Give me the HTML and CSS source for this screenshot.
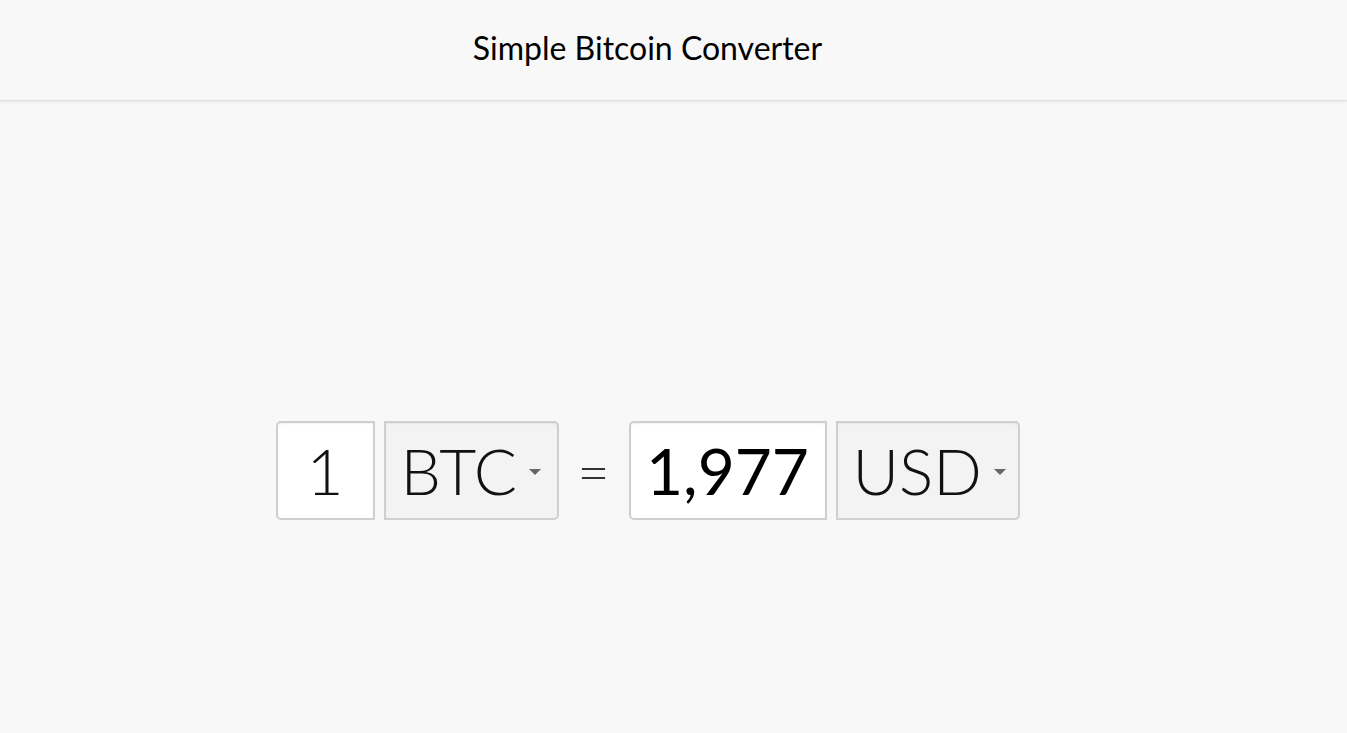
FILE: index.html
```html
<!DOCTYPE html>
<html>
<head>
<meta charset="utf-8">
<link rel="stylesheet" href="styles.css">
</head>
<body>
<header class="header">
  <div class="wrap">
    <h1 class="title">Simple Bitcoin Converter</h1>
  </div>
</header>
<main class="main">
  <div class="wrap">
    <div class="row">
      <div class="group">
        <div class="field field-amount">1</div>
        <div class="select select-btc"><span>BTC</span><i class="caret"></i></div>
      </div>
      <div class="equals">=</div>
      <div class="group">
        <div class="field field-result">1,977</div>
        <div class="select select-usd"><span>USD</span><i class="caret"></i></div>
      </div>
    </div>
  </div>
</main>
</body>
</html>
```
FILE: styles.css
```css
* { box-sizing: border-box; }
html, body { margin: 0; padding: 0; }
body {
  background: #f8f8f8;
  font-family: Lato, "Open Sans", sans-serif;
  color: #111;
  height: 733px;
  overflow: hidden;
}
.wrap { width: 1295px; }
.header {
  height: 101px;
  background: #f8f8f8;
  border-bottom: 1px solid #e0e0e0;
  box-shadow: 0 1px 4px rgba(0,0,0,0.08);
  position: relative;
  z-index: 1;
}
.title {
  margin: 0;
  padding-top: 28px;
  font-size: 32px;
  font-weight: 400;
  line-height: 40px;
  text-align: center;
  color: #000;
}
.main { padding-top: 320px; }
.row {
  display: flex;
  justify-content: center;
  align-items: center;
}
.group { display: flex; gap: 9px; }
.field, .select {
  height: 99px;
  border: 2px solid #cfcfcf;
  box-shadow: inset 0 1px 2px rgba(0,0,0,0.06);
  font-size: 64px;
  font-weight: 300;
  line-height: 95px;
  color: #111;
}
.field {
  background: #fff;
  border-radius: 5px 0 0 5px;
  text-align: center;
}
.field-amount { width: 99px; }
.field-result { width: 198px; font-weight: 400; color: #000; }
.select {
  background: #f3f3f3;
  border-radius: 0 5px 5px 0;
  display: flex;
  align-items: center;
  padding-left: 15px;
}
.select-btc { width: 175px; }
.select-usd { width: 184px; }
.caret {
  width: 0; height: 0;
  margin-left: 12px;
  margin-top: 2px;
  border-left: 6px solid transparent;
  border-right: 6px solid transparent;
  border-top: 6px solid #666;
}
.equals {
  font-size: 56px;
  font-weight: 300;
  color: #333;
  width: 70px;
  text-align: center;
  line-height: 95px;
}
```
